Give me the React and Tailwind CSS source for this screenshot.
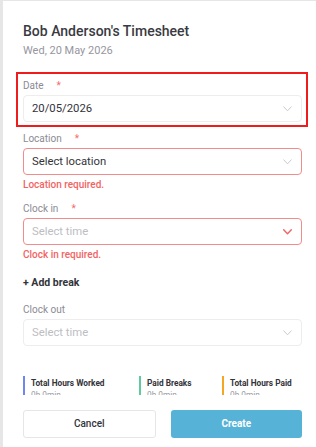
import React from "react";

const Chevron = ({ color = "#c9c9cc", w = 1 }) => (
  <svg width="9" height="6" viewBox="0 0 9 6" fill="none">
    <path d="M0.7 0.8 L4.5 4.8 L8.3 0.8" stroke={color} strokeWidth={w} strokeLinecap="round" strokeLinejoin="round" />
  </svg>
);

const Label = ({ children, required }) => (
  <div className="flex items-center h-[12px] text-[10px] leading-[12px] text-[#8b8b93]">
    <span>{children}</span>
    {required && <span className="ml-[13px] text-[#f26b6b] text-[10px]">*</span>}
  </div>
);

const Select = ({ value, placeholder, error, chevronColor, chevronW }) => (
  <div
    className={
      "mt-[3px] h-[27px] rounded-[4px] border flex items-center justify-between pl-[8px] pr-[9px] " +
      (error ? "border-[#f28b8b]" : "border-[#ededed]")
    }
  >
    <span className={"text-[11.3px] leading-[14px] " + (value ? "text-[#33333a]" : "text-[#bdbdc2]")}>
      {value || placeholder}
    </span>
    <Chevron color={chevronColor} w={chevronW} />
  </div>
);

const Stat = ({ color, label }) => (
  <div className="flex h-[19px] overflow-hidden">
    <div className={"w-[2px] h-full shrink-0 " + color} />
    <div className="pl-[6px] pt-[2px]">
      <div className="text-[8.3px] font-bold text-[#33333a] leading-[10px] whitespace-nowrap">{label}</div>
      <div className="mt-[2px] text-[8.3px] text-[#9a9aa0] leading-[10px] whitespace-nowrap">0h 0min</div>
    </div>
  </div>
);

export default function App() {
  return (
    <div
      className="w-[316px] h-[447px] bg-[#e6e6e6] pl-[3px] pt-[1px] overflow-hidden"
      style={{ fontFamily: "Roboto, 'Noto Sans', sans-serif" }}
    >
      <div className="bg-white h-full flex flex-col">
        <div className="h-[395px] shrink-0 overflow-hidden">
          <div className="pl-[20px] pr-[11px] pt-[22px]">
            <div className="text-[14px] font-medium text-[#3a3a42] leading-[17px]">Bob Anderson's Timesheet</div>
            <div className="mt-[4px] text-[11px] text-[#9696a0] leading-[13px]">Wed, 20 May 2026</div>
          </div>
          <div className="mt-[15px] ml-[13px] mr-[8px] border-2 border-[#ee1c1c] pl-[5px] pr-[4px] pt-[6px] pb-[3px]">
            <Label required>Date</Label>
            <Select value="20/05/2026" />
          </div>
          <div className="pl-[20px] pr-[14px] pt-[6px]">
            <Label required>Location</Label>
            <Select value="Select location" error />
            <div className="mt-[4px] text-[10px] font-medium text-[#f26464] leading-[12px]">Location required.</div>
            <div className="mt-[12px]">
              <Label required>Clock in</Label>
              <Select placeholder="Select time" error chevronColor="#f26464" chevronW={1.4} />
            </div>
            <div className="mt-[4px] text-[10px] font-medium text-[#f26464] leading-[12px]">Clock in required.</div>
            <div className="mt-[16px] text-[10.5px] font-bold text-[#33333a] leading-[12px]">+ Add break</div>
            <div className="mt-[15px]">
              <Label>Clock out</Label>
              <Select placeholder="Select time" />
            </div>
            <div className="mt-[30px] flex">
              <div className="w-[116px]">
                <Stat color="bg-[#6f86ee]" label="Total Hours Worked" />
              </div>
              <div className="w-[83px]">
                <Stat color="bg-[#5fcb9d]" label="Paid Breaks" />
              </div>
              <div>
                <Stat color="bg-[#f5a623]" label="Total Hours Paid" />
              </div>
            </div>
          </div>
        </div>
        <div className="pl-[20px] pr-[14px] pt-[14px] flex gap-[15px]">
          <button className="w-[133px] h-[28px] rounded-[3px] border border-[#e6e6e6] bg-white text-[10px] font-medium text-[#33333a] leading-[12px]">
            Cancel
          </button>
          <button className="w-[132px] h-[28px] rounded-[3px] bg-[#56b2d6] text-[10px] font-bold text-white leading-[12px]">
            Create
          </button>
        </div>
      </div>
    </div>
  );
}
